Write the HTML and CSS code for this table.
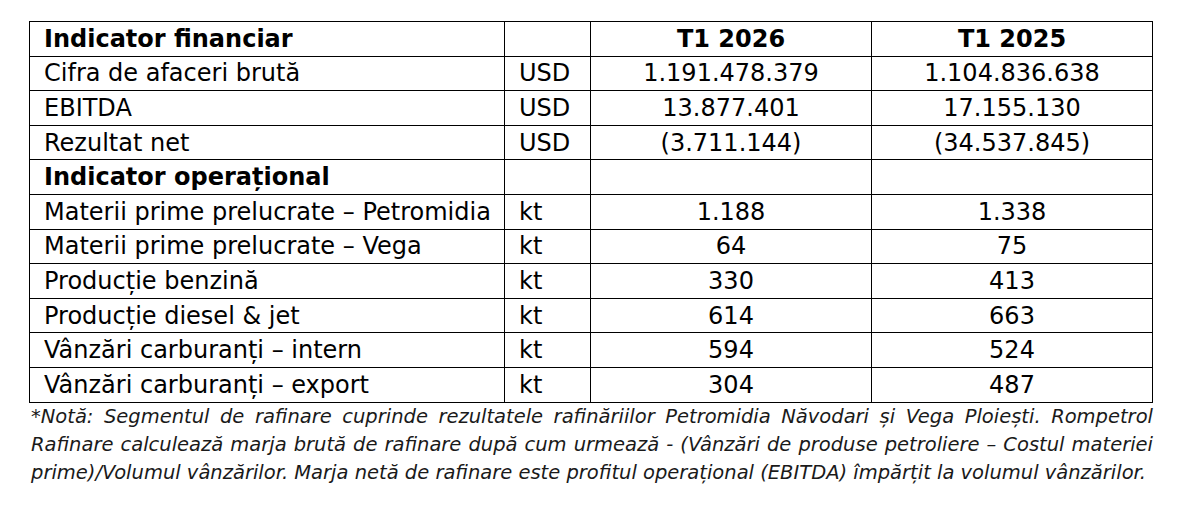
FILE: index.html
```html
<!DOCTYPE html>
<html lang="ro">
<head>
<meta charset="utf-8">
<title>Indicatori</title>
<link rel="stylesheet" href="styles.css">
</head>
<body>
<div class="wrap">
  <table class="fin">
    <colgroup>
      <col class="c-name">
      <col class="c-unit">
      <col class="c-val">
      <col class="c-val">
    </colgroup>
    <tbody>
      <tr class="head"><td class="name">Indicator financiar</td><td></td><td class="val">T1 2026</td><td class="val">T1 2025</td></tr>
      <tr><td class="name">Cifra de afaceri brută</td><td class="unit">USD</td><td class="val">1.191.478.379</td><td class="val">1.104.836.638</td></tr>
      <tr><td class="name">EBITDA</td><td class="unit">USD</td><td class="val">13.877.401</td><td class="val">17.155.130</td></tr>
      <tr><td class="name">Rezultat net</td><td class="unit">USD</td><td class="val">(3.711.144)</td><td class="val">(34.537.845)</td></tr>
      <tr class="head"><td class="name">Indicator operațional</td><td></td><td></td><td></td></tr>
      <tr><td class="name">Materii prime prelucrate – Petromidia</td><td class="unit">kt</td><td class="val">1.188</td><td class="val">1.338</td></tr>
      <tr><td class="name">Materii prime prelucrate – Vega</td><td class="unit">kt</td><td class="val">64</td><td class="val">75</td></tr>
      <tr><td class="name">Producție benzină</td><td class="unit">kt</td><td class="val">330</td><td class="val">413</td></tr>
      <tr><td class="name">Producție diesel &amp; jet</td><td class="unit">kt</td><td class="val">614</td><td class="val">663</td></tr>
      <tr><td class="name">Vânzări carburanți – intern</td><td class="unit">kt</td><td class="val">594</td><td class="val">524</td></tr>
      <tr><td class="name">Vânzări carburanți – export</td><td class="unit">kt</td><td class="val">304</td><td class="val">487</td></tr>
    </tbody>
  </table>
  <p class="note">*Notă: Segmentul de rafinare cuprinde rezultatele rafinăriilor Petromidia Năvodari și Vega Ploiești. Rompetrol Rafinare calculează marja brută de rafinare după cum urmează - (Vânzări de produse petroliere – Costul materiei prime)/Volumul vânzărilor. Marja netă de rafinare este profitul operațional (EBITDA) împărțit la volumul vânzărilor.</p>
</div>
</body>
</html>
```

FILE: styles.css
```css
html, body {
  margin: 0;
  padding: 0;
  background: #ffffff;
}

body {
  font-family: "DejaVu Sans", Verdana, sans-serif;
  color: #000000;
}

.wrap {
  padding: 21px 0 0 29px;
  width: 1124px;
}

.fin {
  border-collapse: collapse;
  width: 1124px;
  table-layout: fixed;
  font-size: 24px;
}

.c-name { width: 475px; }
.c-unit { width: 86px; }
.c-val { width: 281px; }

.fin td {
  border: 1px solid #000000;
  height: 33.6px;
  padding: 0 0 0 14px;
  vertical-align: middle;
  white-space: nowrap;
  line-height: 1;
}

.fin td.val {
  text-align: center;
  padding: 0;
}

.fin td.unit {
  padding-left: 14px;
}

.head td {
  font-weight: bold;
}

.note {
  margin: 0;
  padding: 0 0 0 2px;
  font-size: 19.5px;
  font-style: italic;
  line-height: 28px;
  text-align: justify;
  color: #1a1a1a;
}
```
